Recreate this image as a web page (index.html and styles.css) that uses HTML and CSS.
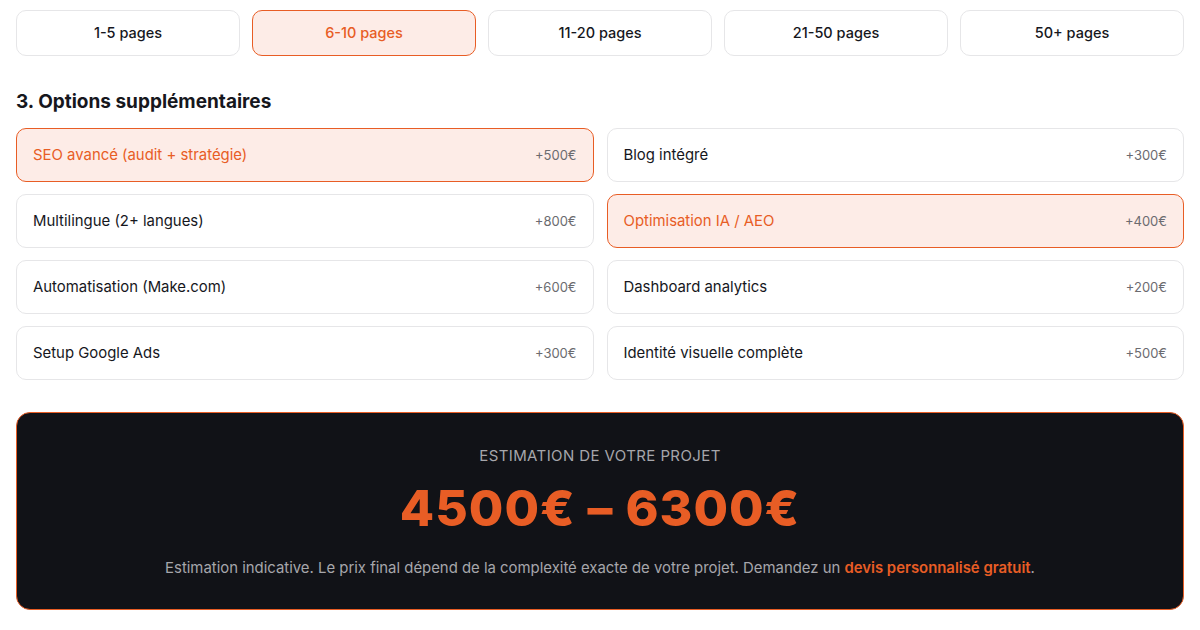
FILE: index.html
```html
<!DOCTYPE html>
<html lang="fr">
<head>
    <meta charset="UTF-8">
    <title>Estimation de projet</title>
    <link rel="stylesheet" href="styles.css">
</head>
<body>
    <!-- Nombre de pages -->
    <section class="pages-row">
        <button class="choice">1-5 pages</button>
        <button class="choice active">6-10 pages</button>
        <button class="choice">11-20 pages</button>
        <button class="choice">21-50 pages</button>
        <button class="choice">50+ pages</button>
    </section>

    <!-- Options -->
    <h2 class="step-title">3. Options supplémentaires</h2>
    <section class="options-grid">
        <div class="option active"><span>SEO avancé (audit + stratégie)</span><span class="price">+500€</span></div>
        <div class="option"><span>Blog intégré</span><span class="price">+300€</span></div>
        <div class="option"><span>Multilingue (2+ langues)</span><span class="price">+800€</span></div>
        <div class="option active"><span>Optimisation IA / AEO</span><span class="price">+400€</span></div>
        <div class="option"><span>Automatisation (Make.com)</span><span class="price">+600€</span></div>
        <div class="option"><span>Dashboard analytics</span><span class="price">+200€</span></div>
        <div class="option"><span>Setup Google Ads</span><span class="price">+300€</span></div>
        <div class="option"><span>Identité visuelle complète</span><span class="price">+500€</span></div>
    </section>

    <!-- Estimation -->
    <section class="estimate">
        <p class="estimate-label">ESTIMATION DE VOTRE PROJET</p>
        <p class="estimate-value">4500€ – 6300€</p>
        <p class="estimate-note">Estimation indicative. Le prix final dépend de la complexité exacte de votre projet. Demandez un <a href="#">devis personnalisé gratuit</a>.</p>
    </section>
</body>
</html>
```

FILE: styles.css
```css
/* General */
body {
    margin: 0;
    padding: 10px 16px;
    font-family: Inter, "Noto Sans", sans-serif;
    background-color: #fff;
    color: #16171d;
}

/* Pages */
.pages-row {
    display: grid;
    grid-template-columns: repeat(5, 1fr);
    gap: 12px;
}

.choice {
    height: 46px;
    padding: 0 0 2px;
    border: 1px solid #e6e6e8;
    border-radius: 10px;
    background-color: #fff;
    font-family: inherit;
    font-size: 14.5px;
    font-weight: 500;
    color: #16171d;
}

.choice.active {
    background-color: #fdece7;
    border-color: #e85d25;
    color: #e85d25;
}

/* Options */
.step-title {
    margin: 34px 0 14px;
    font-size: 19px;
    line-height: 24px;
    font-weight: 700;
    color: #16171d;
}

.options-grid {
    display: grid;
    grid-template-columns: 1fr 1fr;
    gap: 12px 13px;
}

.option {
    height: 54px;
    box-sizing: border-box;
    display: flex;
    justify-content: space-between;
    align-items: center;
    padding: 0 16px;
    border: 1px solid #e6e6e8;
    border-radius: 10px;
    font-size: 14.9px;
}

.option.active {
    background-color: #fdece7;
    border-color: #e85d25;
    color: #e85d25;
}

.option .price {
    font-size: 13px;
    color: #6b6b70;
}

/* Estimate */
.estimate {
    margin-top: 32px;
    height: 198px;
    box-sizing: border-box;
    padding-top: 34px;
    background-color: #111217;
    border: 1px solid #e85d25;
    border-radius: 14px;
    text-align: center;
}

.estimate p {
    margin: 0;
}

.estimate-label {
    font-size: 15px;
    line-height: 18px;
    letter-spacing: 0.4px;
    color: #a6a6ab;
}

.estimate-value {
    margin-top: 13px !important;
    font-size: 50px;
    font-weight: 800;
    line-height: 60px;
    color: #e85d25;
    letter-spacing: 1px;
}

.estimate-note {
    margin-top: 21px !important;
    font-size: 14.9px;
    line-height: 18px;
    color: #a6a6ab;
}

.estimate-note a {
    color: #e85d25;
    font-weight: 600;
    text-decoration: none;
}
```
